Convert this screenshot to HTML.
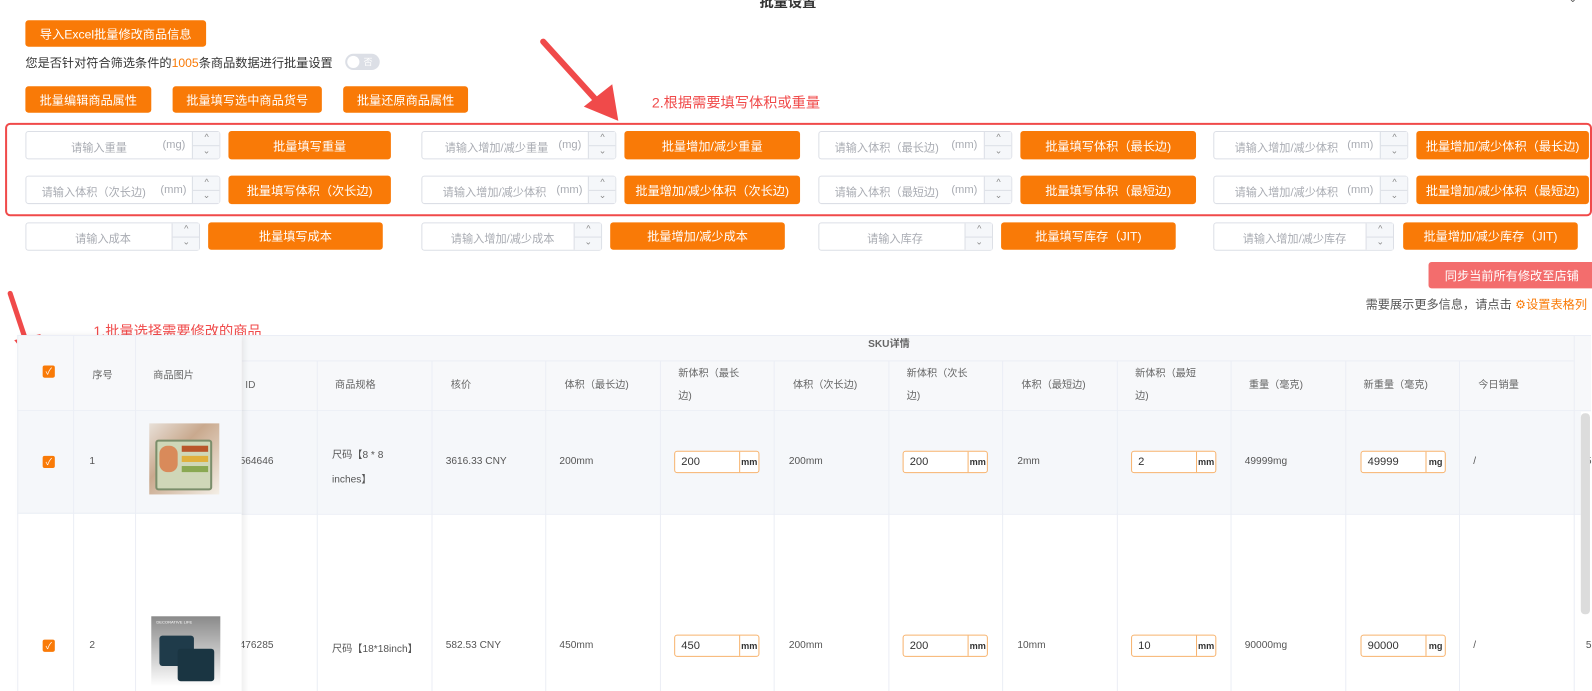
<!DOCTYPE html>
<html><head><meta charset="utf-8"><style>
*{box-sizing:border-box;margin:0;padding:0}
html,body{width:1592px;height:691px;overflow:hidden;background:#fff}
body{font-family:"Liberation Sans","Noto Sans CJK SC",sans-serif;color:#333}
#o{position:relative;width:1592px;height:691px;overflow:hidden}
#w{position:absolute;left:0;top:0;width:1568px;height:681px;transform:scale(1.0153);transform-origin:0 0}
.a{position:absolute}
.btn{position:absolute;background:#f97a07;color:#fff;font-size:12px;border-radius:3px;display:flex;align-items:center;justify-content:center;white-space:nowrap}
.inp{position:absolute;height:28px;border:1px solid #dcdfe6;border-radius:3px;background:#fff;font-size:11px;color:#a8abb2}
.inp .ph{position:absolute;top:7px;white-space:nowrap}
.inp .sp{position:absolute;right:0;top:0;width:27px;height:26px;border-left:1px solid #dcdfe6;background:#f5f7fa}
.inp .sp:after{content:"";position:absolute;left:0;right:0;top:13px;border-top:1px solid #dcdfe6}
.inp .sp i{position:absolute;left:0;width:27px;text-align:center;font-style:normal;font-size:9px;color:#888}
.ann{position:absolute;color:#f04a4a;font-size:14px;white-space:nowrap}
.th{position:absolute;font-size:10px;color:#666;white-space:nowrap;line-height:22px}
.td{position:absolute;font-size:10px;color:#555;white-space:nowrap}
.vl{position:absolute;width:1px;background:#ebeef5}
.ci{position:absolute;width:84px;height:22px;border:1px solid #f7b36e;border-radius:3px;background:#fff;font-size:11px;color:#333}
.ci span{position:absolute;left:6px;top:4px}
.ci b{position:absolute;right:0;top:0;width:19px;height:20px;border-left:1px solid #f7b36e;font-size:9px;line-height:20px;text-align:center;color:#333}
.cb{position:absolute;width:12px;height:12px;background:#f97a07;border-radius:2px;color:#fff;font-size:9px;line-height:12px;text-align:center}
</style></head><body><div id="o"><div id="w">

<div class="a" style="left:748px;top:-8px;font-size:14px;font-weight:bold;color:#333;white-space:nowrap">批量设置</div>
<div class="a" style="left:1545px;top:-6px;font-size:10px;color:#555">⌄</div>

<div class="btn" style="left:25px;top:20px;width:178px;height:26px;font-size:12px">导入Excel批量修改商品信息</div>
<div class="a" style="left:25px;top:53px;font-size:12px;color:#333;white-space:nowrap">您是否针对符合筛选条件的<span style="color:#f97a07">1005</span>条商品数据进行批量设置</div>
<div class="a" style="left:340px;top:53px;width:34px;height:16px;border-radius:8px;background:#dcdfe6"><div class="a" style="left:2px;top:2px;width:12px;height:12px;border-radius:6px;background:#fff"></div><span class="a" style="left:18px;top:1px;font-size:9px;color:#fff">否</span></div>

<div class="btn" style="left:25px;top:85px;width:124px;height:26px">批量编辑商品属性</div>
<div class="btn" style="left:170px;top:85px;width:147px;height:26px">批量填写选中商品货号</div>
<div class="btn" style="left:338px;top:85px;width:123px;height:26px">批量还原商品属性</div>

<div class="ann" style="left:642px;top:91px">2.根据需要填写体积或重量</div>
<svg class="a" style="left:525px;top:35px" width="90" height="90"><line x1="10" y1="6" x2="68" y2="70" stroke="#f04a4a" stroke-width="6" stroke-linecap="round"/><polygon points="50,70 84,84 78,48" fill="#f04a4a"/></svg>
<svg class="a" style="left:2px;top:285px" width="45" height="75"><line x1="8" y1="4" x2="24" y2="52" stroke="#f04a4a" stroke-width="5" stroke-linecap="round"/><polygon points="12,50 30,72 38,44" fill="#f04a4a"/></svg>

<div class="a" style="left:5px;top:121px;width:1563px;height:92px;border:2px solid #f04a4a;border-radius:5px"></div>

<div class="inp" style="left:25px;top:129px;width:192px"><span class="ph" style="left:44px">请输入重量</span><span class="ph" style="left:134px">(mg)</span><div class="sp"><i style="top:0">^</i><i style="top:13px">⌄</i></div></div>
<div class="btn" style="left:225px;top:129px;width:160px;height:28px">批量填写重量</div>
<div class="inp" style="left:415px;top:129px;width:192px"><span class="ph" style="left:22px">请输入增加/减少重量</span><span class="ph" style="left:134px">(mg)</span><div class="sp"><i style="top:0">^</i><i style="top:13px">⌄</i></div></div>
<div class="btn" style="left:615px;top:129px;width:173px;height:28px">批量增加/减少重量</div>
<div class="inp" style="left:806px;top:129px;width:191px"><span class="ph" style="left:15px">请输入体积（最长边)</span><span class="ph" style="left:130px">(mm)</span><div class="sp"><i style="top:0">^</i><i style="top:13px">⌄</i></div></div>
<div class="btn" style="left:1005px;top:129px;width:173px;height:28px">批量填写体积（最长边)</div>
<div class="inp" style="left:1195px;top:129px;width:192px"><span class="ph" style="left:20px">请输入增加/减少体积</span><span class="ph" style="left:131px">(mm)</span><div class="sp"><i style="top:0">^</i><i style="top:13px">⌄</i></div></div>
<div class="btn" style="left:1395px;top:129px;width:170px;height:28px">批量增加/减少体积（最长边)</div>

<div class="inp" style="left:25px;top:173px;width:192px"><span class="ph" style="left:15px">请输入体积（次长边)</span><span class="ph" style="left:132px">(mm)</span><div class="sp"><i style="top:0">^</i><i style="top:13px">⌄</i></div></div>
<div class="btn" style="left:225px;top:173px;width:160px;height:28px">批量填写体积（次长边)</div>
<div class="inp" style="left:415px;top:173px;width:192px"><span class="ph" style="left:20px">请输入增加/减少体积</span><span class="ph" style="left:132px">(mm)</span><div class="sp"><i style="top:0">^</i><i style="top:13px">⌄</i></div></div>
<div class="btn" style="left:615px;top:173px;width:173px;height:28px">批量增加/减少体积（次长边)</div>
<div class="inp" style="left:806px;top:173px;width:191px"><span class="ph" style="left:15px">请输入体积（最短边)</span><span class="ph" style="left:130px">(mm)</span><div class="sp"><i style="top:0">^</i><i style="top:13px">⌄</i></div></div>
<div class="btn" style="left:1005px;top:173px;width:173px;height:28px">批量填写体积（最短边)</div>
<div class="inp" style="left:1195px;top:173px;width:192px"><span class="ph" style="left:20px">请输入增加/减少体积</span><span class="ph" style="left:131px">(mm)</span><div class="sp"><i style="top:0">^</i><i style="top:13px">⌄</i></div></div>
<div class="btn" style="left:1395px;top:173px;width:170px;height:28px">批量增加/减少体积（最短边)</div>

<div class="inp" style="left:25px;top:219px;width:172px"><span class="ph" style="left:48px">请输入成本</span><div class="sp"><i style="top:0">^</i><i style="top:13px">⌄</i></div></div>
<div class="btn" style="left:205px;top:219px;width:172px;height:27px">批量填写成本</div>
<div class="inp" style="left:415px;top:219px;width:178px"><span class="ph" style="left:28px">请输入增加/减少成本</span><div class="sp"><i style="top:0">^</i><i style="top:13px">⌄</i></div></div>
<div class="btn" style="left:601px;top:219px;width:172px;height:27px">批量增加/减少成本</div>
<div class="inp" style="left:806px;top:219px;width:172px"><span class="ph" style="left:47px">请输入库存</span><div class="sp"><i style="top:0">^</i><i style="top:13px">⌄</i></div></div>
<div class="btn" style="left:986px;top:219px;width:172px;height:27px">批量填写库存（JIT)</div>
<div class="inp" style="left:1195px;top:219px;width:178px"><span class="ph" style="left:28px">请输入增加/减少库存</span><div class="sp"><i style="top:0">^</i><i style="top:13px">⌄</i></div></div>
<div class="btn" style="left:1382px;top:219px;width:172px;height:27px">批量增加/减少库存（JIT)</div>

<div class="btn" style="left:1407px;top:258px;width:164px;height:26px;background:#f36d6d">同步当前所有修改至店铺</div>
<div class="a" style="left:1345px;top:291px;font-size:12px;color:#555;white-space:nowrap">需要展示更多信息，请点击 <span style="color:#f97a07">⚙设置表格列</span></div>

<div class="ann" style="left:92px;top:316px">1.批量选择需要修改的商品</div>

<div class="a" style="left:17px;top:330px;width:1550px;height:75px;background:#f7f8fa;border-top:1px solid #ebeef5"></div>
<div class="a" style="left:238px;top:355px;width:1312px;height:1px;background:#ebeef5"></div>
<div class="a" style="left:17px;top:404px;width:1550px;height:1px;background:#ebeef5"></div>
<div class="a" style="left:17px;top:405px;width:1540px;height:101px;background:#f5f7fa"></div>
<div class="a" style="left:17px;top:506px;width:1540px;height:1px;background:#ebeef5"></div>
<div class="th" style="left:855px;top:329px;font-weight:bold">SKU详情</div>
<div class="vl" style="left:1550px;top:330px;height:361px"></div>

<div class="vl" style="left:312px;top:355px;height:336px"></div>
<div class="vl" style="left:425px;top:355px;height:336px"></div>
<div class="vl" style="left:537px;top:355px;height:336px"></div>
<div class="vl" style="left:650px;top:355px;height:336px"></div>
<div class="vl" style="left:762px;top:355px;height:336px"></div>
<div class="vl" style="left:875px;top:355px;height:336px"></div>
<div class="vl" style="left:987px;top:355px;height:336px"></div>
<div class="vl" style="left:1100px;top:355px;height:336px"></div>
<div class="vl" style="left:1212px;top:355px;height:336px"></div>
<div class="vl" style="left:1325px;top:355px;height:336px"></div>
<div class="vl" style="left:1437px;top:355px;height:336px"></div>

<div class="th" style="left:236px;top:369px">I ID</div>
<div class="th" style="left:330px;top:369px">商品规格</div>
<div class="th" style="left:444px;top:369px">核价</div>
<div class="th" style="left:556px;top:369px">体积（最长边)</div>
<div class="th" style="left:668px;top:358px">新体积（最长<br>边)</div>
<div class="th" style="left:781px;top:369px">体积（次长边)</div>
<div class="th" style="left:893px;top:358px">新体积（次长<br>边)</div>
<div class="th" style="left:1006px;top:369px">体积（最短边)</div>
<div class="th" style="left:1118px;top:358px">新体积（最短<br>边)</div>
<div class="th" style="left:1230px;top:369px">重量（毫克)</div>
<div class="th" style="left:1343px;top:369px">新重量（毫克)</div>
<div class="th" style="left:1456px;top:369px">今日销量</div>

<div class="td" style="left:236px;top:449px">564646</div>
<div class="td" style="left:327px;top:437px;line-height:24px">尺码【8 * 8<br>inches】</div>
<div class="td" style="left:439px;top:449px">3616.33 CNY</div>
<div class="td" style="left:551px;top:449px">200mm</div>
<div class="ci" style="left:664px;top:444px"><span>200</span><b>mm</b></div>
<div class="td" style="left:777px;top:449px">200mm</div>
<div class="ci" style="left:889px;top:444px"><span>200</span><b>mm</b></div>
<div class="td" style="left:1002px;top:449px">2mm</div>
<div class="ci" style="left:1114px;top:444px"><span>2</span><b>mm</b></div>
<div class="td" style="left:1226px;top:449px">49999mg</div>
<div class="ci" style="left:1340px;top:444px"><span>49999</span><b>mg</b></div>
<div class="td" style="left:1451px;top:449px">/</div>
<div class="td" style="left:1562px;top:449px">5</div>

<div class="td" style="left:236px;top:630px">476285</div>
<div class="td" style="left:327px;top:630px">尺码【18*18inch】</div>
<div class="td" style="left:439px;top:630px">582.53 CNY</div>
<div class="td" style="left:551px;top:630px">450mm</div>
<div class="ci" style="left:664px;top:625px"><span>450</span><b>mm</b></div>
<div class="td" style="left:777px;top:630px">200mm</div>
<div class="ci" style="left:889px;top:625px"><span>200</span><b>mm</b></div>
<div class="td" style="left:1002px;top:630px">10mm</div>
<div class="ci" style="left:1114px;top:625px"><span>10</span><b>mm</b></div>
<div class="td" style="left:1226px;top:630px">90000mg</div>
<div class="ci" style="left:1340px;top:625px"><span>90000</span><b>mg</b></div>
<div class="td" style="left:1451px;top:630px">/</div>
<div class="td" style="left:1562px;top:630px">5</div>

<div class="a" style="left:1557px;top:407px;width:9px;height:198px;background:#dcdcdc;border-radius:4px"></div>

<div class="a" style="left:17px;top:330px;width:221px;height:361px;box-shadow:3px 0 6px rgba(0,0,0,0.08);background:#fff"></div>
<div class="a" style="left:17px;top:330px;width:221px;height:75px;background:#f7f8fa;border-top:1px solid #ebeef5;border-bottom:1px solid #ebeef5"></div>
<div class="a" style="left:17px;top:405px;width:221px;height:101px;background:#f5f7fa;border-bottom:1px solid #ebeef5"></div>
<div class="vl" style="left:17px;top:330px;height:361px"></div>
<div class="vl" style="left:72px;top:330px;height:361px"></div>
<div class="vl" style="left:133px;top:330px;height:361px"></div>
<div class="cb" style="left:42px;top:360px">✓</div>
<div class="th" style="left:91px;top:360px">序号</div>
<div class="th" style="left:151px;top:360px">商品图片</div>
<div class="cb" style="left:42px;top:449px">✓</div>
<div class="td" style="left:88px;top:449px">1</div>
<div class="cb" style="left:42px;top:630px">✓</div>
<div class="td" style="left:88px;top:630px">2</div>

<div class="a" style="left:147px;top:417px;width:69px;height:70px;background:linear-gradient(135deg,#e8e0d8,#c9a98e 40%,#f4efe6)">
  <div class="a" style="left:6px;top:16px;width:56px;height:50px;background:#cfd7b8;border:2px solid #7b8e6b;border-radius:3px"></div>
  <div class="a" style="left:10px;top:22px;width:18px;height:26px;background:#d98a5a;border-radius:8px"></div>
  <div class="a" style="left:32px;top:22px;width:26px;height:6px;background:#b9562a"></div>
  <div class="a" style="left:32px;top:32px;width:26px;height:6px;background:#e0b03c"></div>
  <div class="a" style="left:32px;top:42px;width:26px;height:6px;background:#8aa852"></div>
</div>
<div class="a" style="left:149px;top:607px;width:68px;height:69px;background:linear-gradient(#8a8a8a,#fff)">
  <div class="a" style="left:5px;top:3px;font-size:4px;color:#fff;white-space:nowrap">DECORATIVE LIFE</div>
  <div class="a" style="left:8px;top:19px;width:34px;height:30px;background:#1f3b4a;border-radius:3px"></div>
  <div class="a" style="left:26px;top:32px;width:36px;height:32px;background:#1a3542;border-radius:3px"></div>
</div>

</div></div></body></html>
